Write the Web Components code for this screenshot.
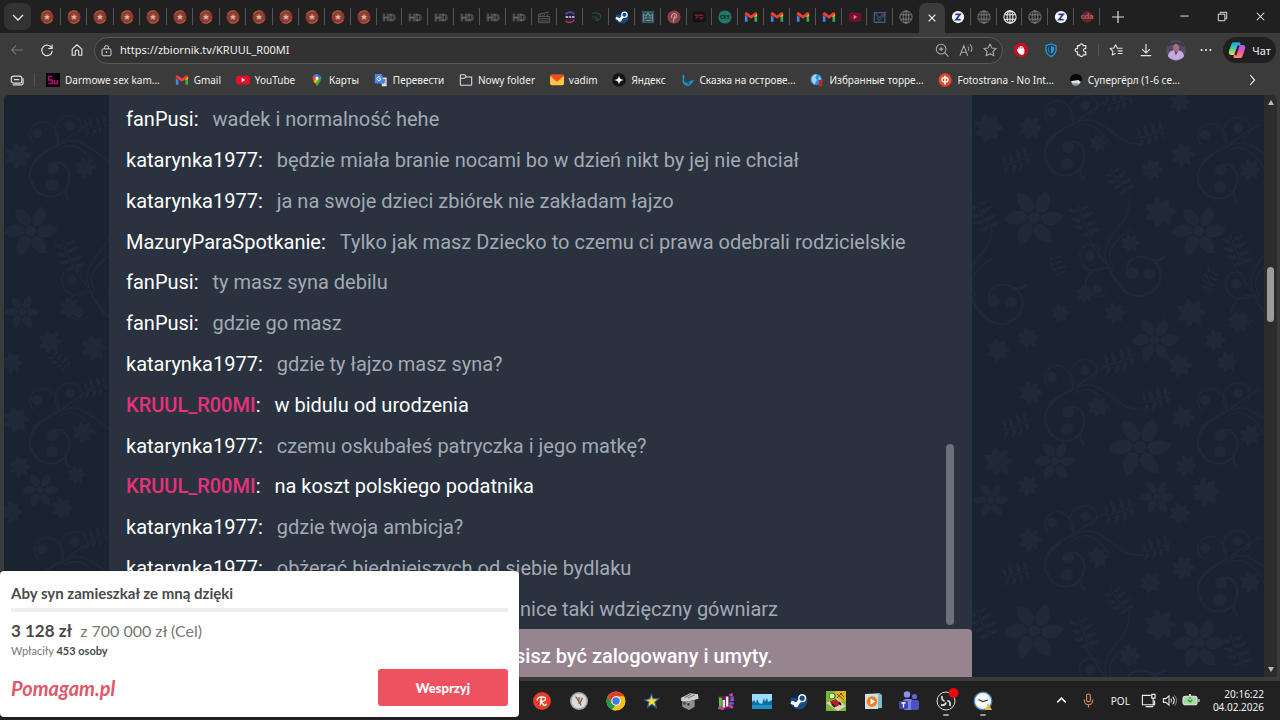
<!DOCTYPE html>
<html lang="pl">
<head>
<meta charset="utf-8">
<meta name="viewport" content="width=device-width, initial-scale=1">
<title>zbiornik.tv</title>
<style>
html,body{margin:0;height:100%;background:#3b3b3b;overflow:hidden}
body{font-family:"Noto Sans",sans-serif}
</style>
</head>
<body>
<desktop-screen></desktop-screen>
<script>
const ICONS = {
  down: `<path d="M3 6l5 5 5-5" stroke="#eee" stroke-width="1.300" fill="none"/>`,
  ball: `<circle cx="8" cy="8" r="7.500" fill="#8c3930"/><path d="M2 5a7 7 0 0 1 10-3M4 14a7 7 0 0 0 10-3" stroke="#a25d35" stroke-width="1.500" fill="none"/><circle cx="8" cy="8" r="4" fill="#a04842"/><path d="M8 4.800l1 2 2.300.2-1.700 1.500.6 2.300L8 9.600l-2.200 1.200.6-2.300L4.700 7 7 6.800z" fill="#d6b9ae"/>`,
  hd: `<text x="8" y="12" text-anchor="middle" font-family="Roboto,sans-serif" font-weight="700" font-size="11" fill="#222" stroke="#666" stroke-width=".8">HD</text>`,
  clap: `<path d="M1.500 7.500h13v7h-13zM1.500 5l12-2.500M1.500 5v2.500M3 7.500l2-3M7 7.500l2-3M11 7.500l2-3M2 10h12M2 12.500h12" stroke="#606060" fill="none"/>`,
  avd: `<circle cx="8" cy="8" r="6.500" fill="#281d38"/><path d="M3 5a6 6 0 0 1 10 0" stroke="#4a55a0" stroke-width="2" fill="none"/><path d="M3 12a6 6 0 0 0 10-1" stroke="#923d51" stroke-width="2" fill="none"/><path d="M3 8h3M7 8h2M10 8h3" stroke="#b9a6c6" stroke-width="2.500"/>`,
  dgreen: `<path d="M3 4c8-2 11 1 10 5-1 4-6 4-5 1M3 8c4-1 8 1 7 4" fill="none" stroke="#254a43" stroke-width="1.300"/>`,
  steam: `<circle cx="8" cy="8" r="7.500" fill="#164a80"/><path d="M1 5a7.500 7.500 0 0 1 14 0z" fill="#12233e"/><path d="M1 9l5 2 4-5" stroke="#f4f8fc" stroke-width="3" fill="none"/><circle cx="10.800" cy="5.500" r="3" fill="#164a80" stroke="#fff" stroke-width="1.400"/><circle cx="5.500" cy="11.500" r="2" fill="#fff"/>`,
  sketch: `<rect x="1" y="1" width="14" height="14" fill="#33545d"/><path d="M3 13V5l3 2 2-4 2 4 3-2v8M4 9h3M9 9h3M6 12h5" stroke="#789aa3" fill="none"/>`,
  pin: `<circle cx="8" cy="8" r="7.500" fill="#8d3f48"/><path d="M7 14l2-8M5.500 9C3.500 4 11 2.500 11 6.500c0 3-2.500 3.500-3.500 2" stroke="#c29ca1" stroke-width="1.300" fill="none"/>`,
  sport: `<rect x="1" y="2" width="14" height="12" fill="#170f10"/><path d="M3 6h4l-1 2-2 2M8 6h5M8 9h4l-2 2" stroke="#78282b" stroke-width="1.500" fill="none"/>`,
  olx: `<circle cx="8" cy="8" r="7.500" fill="#1f7b69"/><circle cx="5" cy="8" r="2" stroke="#122c29" stroke-width="1.300" fill="none"/><path d="M8 5v5M10 6l3 4M13 6l-3 4" stroke="#122c29" stroke-width="1.300"/>`,
  gmail: `<path d="M1 4.500V13.500h3V7z" fill="#4285f4"/><path d="M15 4.500V13.500h-3V7z" fill="#34a853"/><path d="M1 4v2.500l3 2.200V5z" fill="#c5221f"/><path d="M15 4v2.500l-3 2.200V5z" fill="#fbbc04"/><path d="M1 4.500C1 2.500 2.800 2 4 3L8 6.200l4-3.200C13.200 2 15 2.500 15 4.500L8 10z" fill="#ea4335"/>`,
  yt: `<rect x="0" y="3" width="16" height="10" rx="2.500" fill="#e60e2b"/><path d="M6.500 5.500v5l4-2.500z" fill="#fff"/>`,
  ytdim: `<rect x="1" y="3" width="14" height="10" rx="2.500" fill="#7d0c2b"/><path d="M6.500 5.500v5l4-2.500z" fill="#b68e99"/>`,
  mailchk: `<path d="M1.500 3h12v11h-12z" fill="none" stroke="#315f86" stroke-width="1.600"/><path d="M2 3l5 6 8-7" fill="none" stroke="#583f70" stroke-width="1.600"/><path d="M4 9l3 3 7-7" fill="none" stroke="#4a7892"/>`,
  globe: `<g fill="none" stroke="#858585"><circle cx="8" cy="8" r="7"/><ellipse cx="8" cy="8" rx="3.300" ry="7"/><path d="M2 5.500h12M2 10.500h12M8 1.500v13"/></g>`,
  globew: `<g fill="none" stroke="#ececec" stroke-width="1.200"><circle cx="8" cy="8" r="7"/><ellipse cx="8" cy="8" rx="3.300" ry="7"/><path d="M2 5.500h12M2 10.500h12M8 1.500v13"/></g>`,
  close: `<path d="M3.500 3.500l9 9M12.500 3.500l-9 9" stroke="#f2f2f2" stroke-width="1.500"/>`,
  z: `<circle cx="8" cy="8" r="7" fill="#f3f5ff"/><path d="M5 5h5.500L5.500 11H11" stroke="#27397c" stroke-width="1.800" fill="none"/>`,
  cda: `<circle cx="8" cy="8" r="6.500" fill="#672329"/><text x="8" y="10.500" text-anchor="middle" font-family="Roboto,sans-serif" font-size="9" font-weight="700" fill="#b25f66">cda</text>`,
  plus: `<path d="M8 2v12M2 8h12" stroke="#ddd" stroke-width="1.200"/>`,
  min: `<path d="M3.500 7.500h9" stroke="#eee"/>`,
  restore: `<path d="M3.500 5.500h7v7h-7zM5.500 5V3.500h7v7H11" stroke="#eee" fill="none" stroke-linejoin="round"/>`,
  x: `<path d="M4 4l8 8M12 4l-8 8" stroke="#eee" stroke-width="1.100"/>`,
  back: `<path d="M15 8H2M7 3L2 8l5 5" stroke="#777" fill="none" stroke-width="1.200"/>`,
  reload: `<path d="M13.500 6A6 6 0 1 0 14 9M13.800 2v4.300H9.500" stroke="#e6e6e6" fill="none" stroke-width="1.300"/>`,
  home: `<path d="M2.500 7L8 2l5.500 5v7H10v-4a2 2 0 0 0-4 0v4H2.500z" stroke="#e6e6e6" fill="none" stroke-width="1.300" stroke-linejoin="round"/>`,
  lock: `<rect x="2.500" y="6" width="11" height="8.500" rx="1.500" fill="none" stroke="#ddd" stroke-width="1.200"/><path d="M5.500 6V4.500a2.500 2.500 0 0 1 5 0V6" stroke="#ddd" stroke-width="1.200" fill="none"/><circle cx="8" cy="10" r="1" fill="#ddd"/>`,
  zoom: `<g stroke="#aaa" fill="none" stroke-width="1.200"><circle cx="7" cy="7" r="5.500"/><path d="M11 11L15.500 15.500M4.500 7h5M7 4.500v5"/></g>`,
  read: `<g stroke="#aaa" fill="none" stroke-width="1.200"><path d="M1 14.500L5.500 3 10 14.500M2.800 10.500h5.500M10 4q2 2 1 5M12.500 1.500q4 4 1 8.500"/></g>`,
  star: `<path d="M8 1l2.100 4.600 5 .6-3.700 3.400 1 5L8 12.200l-4.400 2.400 1-5L.9 6.200l5-.6z" fill="none" stroke="#aaa" stroke-width="1.200" stroke-linejoin="round"/>`,
  hand: `<path d="M4.700 0h6.600L16 4.700v6.600L11.300 16H4.700L0 11.300V4.700z" fill="#c70d21"/><path d="M5.500 8V5M7.200 7V3.500M9 7V3.500M10.600 8V5M5 7.500h6.200v3Q11 13 8.500 13 7 13 5 10L3.500 7.500" fill="#fff" stroke="#fff" stroke-width="1.300"/>`,
  shield: `<path d="M8 1l5.800 2v5Q13.500 12.500 8 15.500 2.500 12.500 2.200 8V3z" fill="#22394b" stroke="#239bd0" stroke-width="1.500"/><path d="M8 3.500l3.500 1.300V8q-.5 3-3.500 4.500z" fill="#239bd0"/><path d="M5 5v4l1.500 2" stroke="#239bd0" fill="none"/>`,
  puzzle: `<path d="M4 3h2.500a2 2 0 0 1 4 0H13.500V6.500a1.900 1.900 0 1 0 0 3.500v3.500h-3a2 2 0 0 1-4 0H4V10A1.900 1.900 0 1 1 4 6.500z" fill="none" stroke="#e6e6e6" stroke-width="1.300" stroke-linejoin="round"/>`,
  favs: `<path d="M11 6H9.500L7.500 2 5.600 5.800l-4.300.6 3.100 3-.7 4.300 3.800-2M10 6h5.500M10 9h5.500M10 12h5.500" fill="none" stroke="#e6e6e6" stroke-width="1.200" stroke-linejoin="round"/>`,
  dl: `<path d="M8 1v10M3.500 7L8 11.500 12.500 7M2 14.500h12" stroke="#e6e6e6" stroke-width="1.300" fill="none"/>`,
  avatar: `<circle cx="8" cy="8" r="8" fill="#574869"/><path d="M1.500 13Q2 8 8 8t6.500 5A8 8 0 0 1 1.500 13" fill="#c2aade"/><path d="M7 8l1 3 1.500-3" stroke="#533e60" fill="#eee"/><ellipse cx="8" cy="5.500" rx="2.500" ry="3.500" fill="#a96d75"/><path d="M5.500 4q2.500-4 5 0M1.500 4.500L5 2.500M11 2.500l3.500 2.500" stroke="#303b44" stroke-width="1.600" fill="none"/>`,
  dots: `<g fill="#eee"><circle cx="3" cy="8" r="1.200"/><circle cx="8" cy="8" r="1.200"/><circle cx="13" cy="8" r="1.200"/></g>`,
  copilot: `<defs><linearGradient id="a" x2="0" y2="1"><stop stop-color="#1d9bf0"/><stop offset=".5" stop-color="#3dd69a"/><stop offset="1" stop-color="#f6d93a"/></linearGradient><linearGradient id="b" x2="0" y2="1"><stop stop-color="#9f65f3"/><stop offset=".5" stop-color="#ef4eaf"/><stop offset="1" stop-color="#ff9158"/></linearGradient></defs><path d="M5 1h5q1.500 0 1 2L8.500 11q-.5 1.500-2 1.500H2.500Q0 12 1 8.500L3 3Q3.500 1 5 1z" fill="url(#a)"/><path d="M11 15H6q-1.500 0-1-2l2.500-8Q8 3.500 9.500 3.500h4Q16 4 15 7.500L13 13q-.5 2-2 2z" fill="url(#b)"/><path d="M9.500 4l-3 8.500" stroke="#202430" stroke-width="1.800"/>`,
  stack: `<rect x="1.500" y="3.500" width="12" height="8" rx="2.500" fill="none" stroke="#ddd" stroke-width="1.400"/><path d="M3 13.500h9.500a2.500 2.500 0 0 0 2.500-2.500V6M4.500 7.500h6" stroke="#ddd" stroke-width="1.300" fill="none"/>`,
  su: `<rect width="16" height="16" x="0" fill="#08030a"/><path d="M7 4H3v4h4v4H2.500M9.500 8v4H13V8" stroke="#ad0f6c" stroke-width="1.800" fill="none"/>`,
  maps: `<path d="M8 1a5 5 0 0 0-5 5l5-1z" fill="#4285f4"/><path d="M8 1a5 5 0 0 1 4.800 4L8 6z" fill="#1a73e8"/><path d="M3 5l3-3 2 4-3.500 4Q3 8 3 5" fill="#ea4335"/><path d="M5 10l7.500-6Q13.500 6 12 9l-4 6z" fill="#34a853"/><path d="M4 9l4-3 2 1-4 5z" fill="#fbbc04"/><circle cx="8" cy="5.800" r="1.800" fill="#fff"/>`,
  trans: `<path d="M8 5h6.500v10H9z" fill="#d8dce2"/><path d="M1 1h8l3 11H1z" fill="#4b84ed"/><path d="M7.500 5A2.300 2.300 0 1 0 7.500 8V6.500H5.500" stroke="#fff" fill="none"/><path d="M10 8h4M12 7v1q0 3-2 4M11 9l3 3" stroke="#5a6a80" stroke-width=".8" fill="none"/>`,
  folder: `<path d="M1.500 4V3q0-1 1-1h4l2 2.500h6v8.500q0 1-1 1h-11q-1 0-1-1zM1.500 6H6l2-1.500" fill="none" stroke="#ddd" stroke-width="1.200"/>`,
  mail: `<rect x="0" y="2" width="16" height="12" rx="2" fill="#ffc448"/><path d="M1 2h14l1 1-8 7-8-7z" fill="#f34b1c"/>`,
  yandex: `<circle cx="8" cy="8" r="7.800" fill="#121212"/><path d="M8 2.500q.5 5 5.500 5.500-5 .5-5.500 5.500-.5-5-5.500-5.500 5-.5 5.500-5.500" fill="#fff"/>`,
  tale: `<path d="M3 1l2 2v6l4 2 2-2 5-1-2 3-4 4-4-1-3-3z" fill="#1298e7"/><path d="M5 6v4l5 2M11 10l-2 4" stroke="#3b3b3b" fill="none"/>`,
  torr: `<circle cx="7" cy="7.500" r="6.500" fill="#2c93d7"/><path d="M2 5q3-5 6-3l-2 3 2 3-3 5-3-4M10 3l3 4-3 1" fill="#a6d0e5"/><path d="M10 8h4v7h-4z" fill="#b82c31"/>`,
  foto: `<circle cx="8" cy="8" r="7.600" fill="#ed4325"/><path d="M8 3v10" stroke="#fff" stroke-width="1.800"/><ellipse cx="8" cy="7.800" rx="3.600" ry="2.600" stroke="#fff" stroke-width="1.600" fill="none"/>`,
  girl: `<ellipse cx="8" cy="9" rx="5.500" ry="4.500" fill="#e9dfd9"/><path d="M1 9Q1 1 8 1t7 7l-2 2-2-2-8 1z" fill="#070707"/><path d="M3 13q5-3 9 0l-4 2z" fill="#7f9bb8"/>`,
  right: `<path d="M6 2.500L11 8l-5 5.500" stroke="#eee" stroke-width="1.300" fill="none"/>`,
  rr: `<circle cx="8" cy="8" r="8" fill="#e63b29"/><path d="M6.500 12l1-7M4 8Q3 4.500 8 4.500q4 0 3 2.200-.7 1.800-4 1.800L10 12q1.500 0 2-1.500" stroke="#fff" stroke-width="1.300" fill="none"/>`,
  wclock: `<circle cx="8" cy="8" r="8" fill="#a9a9a7"/><circle cx="8" cy="8" r="6.500" fill="#dedbd5"/><path d="M5 4l5 8M8 4.500v6M11 5l-2 5" stroke="#796656" stroke-width="1.200"/>`,
  chrome: `<circle cx="8" cy="8" r="8.500" fill="#fbc116"/><path d="M.64 3.750A8.500 8.500 0 0 1 15.360 3.750H8L4.320 10.100z" fill="#e33b2e"/><path d="M.64 3.750L4.320 10.120 8 12.250 8 16.500A8.500 8.500 0 0 1 .64 3.750" fill="#249a48"/><path d="M11.680 10.120L8 16.500Q6 16.500 4.500 15.500L8 11z" fill="#fbc116"/><circle cx="8" cy="8" r="4.200" fill="#fff"/><circle cx="8" cy="8" r="3.300" fill="#397de8"/>`,
  ystar: `<path d="M7.500 2l1.500 4 5 0-3.500 3 1.500 5-4-3-4 2.500 1.200-4.500-3.700-2L6 6z" fill="#f7dc2c" stroke="#2b5fae" stroke-width="1"/>`,
  tools: `<path d="M1 5l8-4 7 1 .5 4L9 8 1 8z" fill="#cfcfcf"/><path d="M2 8h7l4-1v6l-5 3-6-3z" fill="#93918b"/><path d="M3 9h2v2H3zM6.500 10h2v2h-2z" fill="#333"/><path d="M4 5l6-3M7 5.500l6-3" stroke="#7a7a7a"/>`,
  bars: `<path d="M1 3l10 1 4 10-9 2-4-3z" fill="#5c2050"/><path d="M3 5v8" stroke="#55c943" stroke-width="2.500"/><path d="M6 7v7" stroke="#f4d5dc" stroke-width="2.200"/><path d="M9 4v9" stroke="#eaeaef" stroke-width="2.200"/><path d="M11 3l3-1M12 7h3M11 12l3 2M1 14l5 1" stroke="#da3ab4" stroke-width="2.200"/><path d="M12 5h3M11 10h4" stroke="#4a72d9" stroke-width="2"/>`,
  monitor: `<rect x="-2" y="1" width="20" height="15" fill="#9bdcff"/><path d="M-2 13V9l2-2 2 3 1-4 2 4 3 1 2-6 1 4 2-4 1 4 4-2v6z" fill="#126ca4"/><path d="M-2 12h20v4H-2z" fill="#1d91c8"/>`,
  game: `<rect x="-2" y="-2" width="20" height="20" fill="#79b83e"/><path d="M7-2h11V8H9z" fill="#e5b321"/><path d="M9 1l7 6M12 0l4 4M8 6l6-6" stroke="#73560a"/><path d="M-2 10L9 5l9 8-8 5z" fill="#ddd4b3"/><path d="M2 8l6-2 5 5-5 3-5-3z" fill="#b52222"/><circle cx="4" cy="3" r="3" fill="#e9f69b" stroke="#348c21"/><path d="M4 11l3 3M11 9l2 3" stroke="#222" stroke-width="1.800"/>`,
  media: `<path d="M1 1l13-1 3 2v13L4 16z" fill="#85b9cb"/><rect x="0" y="1" width="13" height="15" fill="#cfe0e3"/><circle cx="7" cy="8.500" r="5.200" fill="#ef7d23"/><path d="M5.500 5.500v6l4.800-3z" fill="#fff"/>`,
  teams: `<circle cx="6" cy="1.500" r="3.200" fill="#8693f0"/><circle cx="13.500" cy="3.500" r="2.600" fill="#6168cf"/><rect x="2" y="6" width="10" height="11" rx="3" fill="#7b80ec"/><rect x="10" y="7" width="8" height="10" rx="2.500" fill="#524fc6"/><rect x="-2" y="8" width="9" height="8" rx="1.300" fill="#3b47ad"/><path d="M.5 10h4M2.500 10v4.500" stroke="#fff" stroke-width="1.300"/>`,
  obs: `<circle cx="8" cy="8" r="9" fill="#252525" stroke="#ddd"/><path d="M8 8Q3 8 4 3M8 8q5-1 4 5M8 8q0 5-5 4" stroke="#ddd" stroke-width="1.800" fill="none"/><circle cx="8" cy="8" r="1.500" fill="#222"/><circle cx="15.500" cy="0" r="5" fill="#e30b10"/>`,
  tclock: `<circle cx="8" cy="8" r="8.800" fill="#dcecf6" stroke="#4684aa" stroke-width="1.200"/><circle cx="8" cy="8" r="7" fill="#f9fcfd"/><path d="M3.500 6.500L8 8.500l5-1.500" stroke="#333" stroke-width="1.200" fill="none"/><path d="M13 10l4 7h-7z" fill="#e6bd50"/>`,
  up: `<path d="M3.500 10L8 5.500l4.500 4.500" stroke="#fff" stroke-width="1.600" fill="none"/>`,
  mic: `<g stroke="#d98b60" stroke-width="1.200" fill="none"><rect x="6" y="1" width="4" height="8.500" rx="2"/><path d="M3.500 7v1a4.500 4.500 0 0 0 9 0V7M8 12.500v3"/></g>`,
  net: `<path d="M10.500 2.500h-9v10h13V8M5 14.500h8M11.500 1.500h3.500v4h-3.500zM13 5.500v8" stroke="#eee" fill="none" stroke-width="1.200"/>`,
  vol: `<path d="M1.500 6H4l3.500-3v10L4 10H1.500zM9.500 6q1.500 2 0 4M11.500 4q3 4 0 8" stroke="#eee" fill="none" stroke-width="1.100"/><path d="M13.500 2.500q4 5.500 0 11" stroke="#888" fill="none"/>`,
  bat: `<rect x="0" y="3.500" width="15" height="9" rx="2.500" fill="#9be09b" stroke="#e2e9e2" stroke-width="1.200"/><path d="M17 6.500v3" stroke="#ddd" stroke-width="1.400"/><path d="M7.500 1v5M5 7l2.500 2.500L10 7" stroke="#4a6a4a" stroke-width="1.200" fill="none"/><path d="M7.500 1v3" stroke="#fff" stroke-width="1.600"/>`
};

function define(name, css, html, setup) {
  const t = document.createElement('template');
  t.innerHTML = `<style>*{box-sizing:border-box}button{font:inherit;color:inherit;border:0;background:none;padding:0;display:flex;align-items:center;justify-content:center}a{color:inherit;text-decoration:none}${css}</style>${html}`;
  customElements.define(name, class extends HTMLElement {
    constructor() {
      super();
      this.attachShadow({mode: 'open'}).append(t.content.cloneNode(true));
    }
    connectedCallback() { if (setup) setup(this, this.shadowRoot); }
  });
}

define('app-icon', `:host{display:block;flex:none;width:var(--size,16px);height:var(--size,16px)}svg{display:block;width:100%;height:100%;overflow:visible}`,
  `<svg viewBox="0 0 16 16" aria-hidden="true"></svg>`,
  (el, root) => { root.querySelector('svg').innerHTML = ICONS[el.getAttribute('name')] || ''; });

const tab = (n) => n === 'close'
  ? `<button class="tab active" aria-label="Zamknij kartę"><app-icon name="close"></app-icon></button>`
  : `<button class="tab" aria-label="Karta"><app-icon name="${n}"></app-icon></button>`;
const pinned = Array(10).fill('ball');
const open = ['ball','ball','ball','hd','hd','hd','hd','hd','hd','clap','avd','dgreen','steam','sketch','pin','sport','olx','gmail','gmail','gmail','gmail','ytdim','mailchk','globe','close','z','globe','globew','globe','z','cda'];

define('tab-strip', `
  :host{display:flex;height:33px;background:#202020;align-items:stretch;padding-right:1px}
  .menu{width:27px;height:27px;margin:3px 3px 3px 4px;border-radius:7px;background:#333}
  .tabs{flex:1;display:flex;min-width:0}
  .group{display:grid;grid-auto-flow:column;grid-auto-columns:1fr;min-width:0}
  .pinned{flex:265 1 0}.open{flex:801 1 0}
  .tab{position:relative;--size:14px;min-width:0}
  .tab::after{content:"";position:absolute;right:0;top:8px;height:17px;width:1px;background:#555}
  .active{background:#3b3b3b;margin-top:3px;border-radius:7px 7px 0 0;--size:12px}
  .active::after,.tab:has(+ .active)::after{display:none}
  .new{width:36px}
  .win{display:flex}.win button{width:38px;--size:15px}
  .gap{width:29px}
`, `
  <button class="menu" aria-label="Karty"><app-icon name="down"></app-icon></button>
  <div class="tabs"><div class="group pinned">${pinned.map(tab).join('')}</div><div class="group open">${open.map(tab).join('')}</div></div>
  <button class="new" aria-label="Nowa karta"><app-icon name="plus"></app-icon></button>
  <div class="gap"></div>
  <div class="win"><button aria-label="Minimalizuj"><app-icon name="min"></app-icon></button><button aria-label="Przywróć"><app-icon name="restore"></app-icon></button><button aria-label="Zamknij"><app-icon name="x"></app-icon></button></div>
`);

define('tool-bar', `
  :host{display:flex;height:34px;align-items:center;padding:0 4px 0 2px;background:#3b3b3b;color:#f2f2f2}
  button{width:30px;height:28px;--size:14px}
  .address{flex:1;display:flex;align-items:center;height:27px;margin:0 3px 0 2px;padding:0 0 0 5px;border:1px solid #5a5a5a;border-radius:14px;background:#323232;--size:13px}
  .address button{width:24px}
  input{flex:1;min-width:0;border:0;outline:0;padding:0 0 0 7px;background:none;color:#eee;font:11px/16px "Noto Sans",sans-serif}
  .sep{width:1px;height:12px;background:#555;margin:0 2px}
  .avatar{--size:20px}
  .chat{width:53px;height:26px;margin-left:2px;border-radius:13px;background:#202020;gap:6px;font-size:11px;--size:18px}
`, `
  <button aria-label="Wstecz"><app-icon name="back"></app-icon></button>
  <button aria-label="Odśwież"><app-icon name="reload"></app-icon></button>
  <button aria-label="Strona główna"><app-icon name="home"></app-icon></button>
  <div class="address"><app-icon name="lock"></app-icon><input aria-label="Adres" value="https://zbiornik.tv/KRUUL_R00MI">
    <button aria-label="Powiększenie"><app-icon name="zoom"></app-icon></button><button aria-label="Czytaj na głos"><app-icon name="read"></app-icon></button><button aria-label="Dodaj do ulubionych"><app-icon name="star"></app-icon></button></div>
  <button aria-label="Adblock"><app-icon name="hand"></app-icon></button>
  <button aria-label="Ochrona"><app-icon name="shield"></app-icon></button>
  <button aria-label="Rozszerzenia"><app-icon name="puzzle"></app-icon></button>
  <div class="sep"></div>
  <button aria-label="Ulubione"><app-icon name="favs"></app-icon></button>
  <button aria-label="Pobrane"><app-icon name="dl"></app-icon></button>
  <button class="avatar" aria-label="Profil"><app-icon name="avatar"></app-icon></button>
  <button aria-label="Więcej"><app-icon name="dots"></app-icon></button>
  <button class="chat"><app-icon name="copilot"></app-icon>Чат</button>
`);

const marks = [['su','Darmowe sex kam...'],['gmail','Gmail'],['yt','YouTube'],['maps','Карты'],['trans','Перевести'],['folder','Nowy folder'],['mail','vadim'],['yandex','Яндекс'],['tale','Сказка на острове...'],['torr','Избранные торре...'],['foto','Fotostrana - No Int...'],['girl','Супергёрл (1-6 се...']];
define('bookmarks-bar', `
  :host{display:flex;height:28px;align-items:center;padding-bottom:2px;background:#3b3b3b;color:#f0f0f0;font-size:10px;line-height:14px;--size:14px;box-sizing:border-box}
  .stack{width:34px}
  .sep{width:1px;height:14px;background:#555;margin-right:11px}
  nav{flex:1;min-width:0;display:flex;justify-content:space-between}
  a{display:flex;align-items:center;gap:5px;white-space:nowrap}
  .more{margin-left:44px;width:56px}
`, `
  <button class="stack" aria-label="Obszary robocze"><app-icon name="stack"></app-icon></button><div class="sep"></div>
  <nav>${marks.map(([i, t]) => `<a href="#"><app-icon name="${i}"></app-icon><span>${t}</span></a>`).join('')}</nav>
  <button class="more" aria-label="Więcej zakładek"><app-icon name="right"></app-icon></button>
`);

const put = (id, list) => list.map(([x, y, s = 1, r = 0]) => `<use href="#${id}" transform="translate(${x} ${y}) rotate(${r}) scale(${s})"/>`).join('');
const petal = (n, d) => Array.from({length: n}, (_, i) => `<path d="${d}" transform="rotate(${i * 360 / n})"/>`).join('');
define('floral-wallpaper', `
  :host{display:block;overflow:hidden;background:#1a2430}
  svg{display:block;width:100%;height:100%}
`, `
  <svg viewBox="4 95 1260 582" preserveAspectRatio="xMinYMin slice" aria-hidden="true">
    <defs>
      <g id="flower"><circle r="6"/>${petal(6, 'M7-2Q16-11 30-3 26 9 11 7L7 2zM13 0q5-4 10-2-3 5-10 2z')}</g>
      <g id="bloom">${petal(7, 'M0-3Q8-7 14 0 8 5 0 3z')}</g>
      <g id="fern"><path d="M-20 6Q0 4 20-8l1 1Q0 7-20 7z"/>
        <path d="M-14 4l-2-11q6 3 5 10zM-6 3l-3-14q7 4 7 12zM3 0L1-14q7 4 6 12zM11-4L10-16q6 4 5 10zM-12 8l-2 9q7-2 6-10zM-3 6l-1 10q7-3 6-11zM5 3l1 11q6-5 3-12zM12-1l4 9q4-6 0-11z"/></g>
      <g id="swirl"><circle cx="2" cy="7" r="6"/><circle cx="3" cy="-10" r="6"/><path d="M12-36Q-4-26-14-16-22-6-17 6L-20 6Q-24-8-15-20-4-30 12-36z"/>
        <g fill="none" stroke="#202937" stroke-width="2.500" stroke-linecap="round"><path d="M-18 4C-14 22 12 24 18 6 23-10 12-18 3-14M17 8q-4 8 2 14"/></g>
        <g fill="none" stroke="#202937" stroke-width="1.500"><path d="M5-30Q20-42 34-34 46-27 56-18 66-12 78-13M8-28Q22-38 34-26 42-20 46-10M7-33Q12-43 2-52-6-60-15-54-25-44-16-35M9-34Q0-52 12-60 25-66 31-56 34-46 25-42M12-36Q28-48 42-56"/></g><circle cx="-13" cy="-45" r="5"/><circle cx="20" cy="-52" r="5"/></g>
    </defs>
    <g fill="#202937">
      ${put('flower', [[1034,218],[1199,231,.9],[1155,340,.8],[1140,447,1.05],[1055,461,.7],[991,500,.6],[1157,497,.6],[1034,631],[1199,643,.9],[31,231,.9],[40,490,.6],[22,312,.6]])}
      ${put('bloom', [[1160,212,1.2],[1191,313,1.1],[1206,492,1.1],[1160,625,1.2],[1030,128,.9],[1098,143,.7],[1152,170,.8],[1183,155,.9],[1130,243,.7],[1115,313,.8],[1060,313,.7],[998,350,.9],[1028,338,.8],[1085,294,.7],[1030,393,.9],[1183,418,.9],[1186,466,.8],[998,462,1.1],[1028,486,.8],[1098,407,.8],[1180,513,.8],[1030,540,.9],[1183,568,.9],[1150,583,.8],[1130,656,.8],[1098,557,.8],[1215,340,.8],[1227,362,.8],[1238,322,.8],[988,128,1.1],[1180,102,.8],[1180,366,.9],[18,156,1],[85,168,.8],[16,420,1],[83,432,.8],[20,467,.8],[50,342,.9],[94,348,1],[12,363,.8],[70,308,.8],[76,475,.7],[12,512,.8],[62,508,.8],[1250,170,.8],[1250,435,.8],[1250,582,.8]])}
      ${put('fern', [[1150,133,.8],[1015,160,.8],[1120,180,.8,70],[1085,220,.9,85],[984,215,.9,80],[1238,250,.9,85],[1058,265,.6,90],[1118,360,.9],[1155,398,.8],[1015,425,.8],[1118,510,.9],[1155,547,.8],[1015,573,.8],[1120,600,.8,70],[1085,632,.9,85],[984,622,.9,80],[1238,650,.9,85],[1118,100,.8],[70,255,.9,85],[95,125,.7],[95,386,.7],[95,537,.7],[60,360,.6,60],[1210,280,.6,130]])}
      ${put('swirl', [[1065,157],[1218,180],[1065,422],[1218,445],[1065,568],[1218,593],[50,178],[50,445],[55,594],[1142,276,1,-90],[1004,304,1,-90],[1142,690,1,-90],[124,300,1,-90],[1288,304,1,-90]])}
    </g>
  </svg>
`);

define('chat-line', `
  :host{display:flex;align-items:center;gap:14px;white-space:nowrap;color:#a3a9b3;min-height:0}
  .name{color:#fff}
  b{font-weight:400}
  :host([host]){color:#fff}
  :host([host]) b{color:#e9307d;font-weight:500}
  :host([cut]) .name{display:none}
  :host([cut]){padding-left:394px}
`, `<span class="name"><b></b>:</span><span class="text"><slot></slot></span>`,
  (el, root) => { root.querySelector('b').textContent = el.getAttribute('from') || ''; });

const log = [
  ['fanPusi','wadek i normalność hehe'],['katarynka1977','będzie miała branie nocami bo w dzień nikt by jej nie chciał'],['katarynka1977','ja na swoje dzieci zbiórek nie zakładam łajzo'],['MazuryParaSpotkanie','Tylko jak masz Dziecko to czemu ci prawa odebrali rodzicielskie'],['fanPusi','ty masz syna debilu'],['fanPusi','gdzie go masz'],['katarynka1977','gdzie ty łajzo masz syna?'],['KRUUL_R00MI','w bidulu od urodzenia'],['katarynka1977','czemu oskubałeś patryczka i jego matkę?'],['KRUUL_R00MI','na koszt polskiego podatnika'],['katarynka1977','gdzie twoja ambicja?'],['katarynka1977','obżerać biedniejszych od siebie bydlaku'],['','nice taki wdzięczny gówniarz']
];
define('chat-panel', `
  :host{position:relative;display:flex;flex-direction:column;min-width:0;background:#29323e;font:20px/28px Roboto,sans-serif}
  .log{flex:1;min-height:0;display:grid;grid-auto-rows:1fr;padding:4px 0 0 17px}
  .thumb{position:absolute;right:18px;top:60%;height:31%;width:8px;border-radius:4px;background:#6a707a}
  .login{height:48px;padding:6px 0 0 406px;display:flex;align-items:center;background:#96848e;border-radius:4px 4px 0 0;color:#fff;font-weight:500;white-space:nowrap;box-sizing:border-box}
`, `
  <div class="log">${log.map(([f, t]) => `<chat-line ${f ? `from="${f}"` : 'cut'} ${f === 'KRUUL_R00MI' ? 'host' : ''}>${t}</chat-line>`).join('')}</div>
  <div class="thumb"></div>
  <div class="login">sisz być zalogowany i umyty.</div>
`);

define('page-view', `
  :host{display:flex;min-height:0;margin:0 3px 0 4px;border-radius:5px 5px 0 0;overflow:hidden}
  .page{position:relative;flex:1;min-width:0;display:grid;grid-template-columns:105px minmax(0,1fr) 292px}
  floral-wallpaper{position:absolute;inset:0}
  chat-panel{grid-column:2}
  .scroll{position:relative;flex:none;width:13px;background:#2c2c2c;display:flex;flex-direction:column;justify-content:space-between;align-items:center;padding:5px 0}
  .scroll i{border:3px solid transparent}
  .scroll .up{border-bottom:5px solid #bbb;border-top:0}
  .scroll .dn{border-top:5px solid #bbb;border-bottom:0}
  .thumb{position:absolute;left:3px;width:7px;top:29.5%;height:9.5%;border-radius:4px;background:#9c9c9c}
`, `
  <div class="page"><floral-wallpaper></floral-wallpaper><chat-panel></chat-panel></div>
  <div class="scroll"><i class="up"></i><div class="thumb"></div><i class="dn"></i></div>
`);

define('donation-card', `
  :host{display:flex;flex-direction:column;padding:12px 11px 11px;background:#fff;border-radius:4px;color:#4a4a4a;font-family:Lato,sans-serif;box-shadow:0 0 1px #000;box-sizing:border-box}
  h2{margin:0;font-size:15px;line-height:20px;font-weight:700}
  progress{appearance:none;display:block;width:100%;height:4px;margin:5px 0 9px;border:0;background:#eee}
  progress::-webkit-progress-bar{background:#eee}
  progress::-webkit-progress-value{background:#eee}
  p{margin:0;line-height:20px}
  .sum{font-size:16px;color:#777;display:flex;gap:8px;align-items:baseline}
  .sum b{font-size:17px;color:#4a4a4a}
  .who{font-size:11px;color:#777}.who b{color:#4a4a4a}
  footer{display:flex;justify-content:space-between;align-items:center;margin-top:auto}
  .logo{color:#e3566a;font:italic 700 20px/24px Lato,cursive}
  footer button{width:130px;height:37px;border-radius:3px;background:#ee5160;color:#fff;font-size:13px;font-weight:900}
`, `
  <h2 id="t">Aby syn zamieszkał ze mną dzięki</h2>
  <progress aria-labelledby="t" max="700000" value="3128"></progress>
  <p class="sum"><b>3 128 zł</b><span>z 700 000 zł (Cel)</span></p>
  <p class="who">Wpłaciły <b>453 osoby</b></p>
  <footer><a class="logo" href="#">Pomagam.pl</a><button>Wesprzyj</button></footer>
`);

const apps = ['rr','wclock','chrome','ystar','tools','bars','monitor','steam','game','media','teams','obs','tclock'];
const small = ['obs','tclock','game','monitor','teams','media'];
define('task-bar', `
  :host{display:flex;height:39px;background:#212121;color:#f0f0f0;font-size:10px;line-height:14px}
  .apps{margin-left:524px;flex:1;display:grid;grid-template-columns:repeat(13,1fr);max-width:477px}
  .apps button{--size:18px;position:relative}
  .apps .s{--size:16px}
  .run::after{content:"";position:absolute;bottom:4px;width:6px;height:2px;border-radius:1px;background:#999}
  .tray{margin-left:auto;display:flex;align-items:center;padding-right:16px}
  .tray button{width:27px;height:30px;--size:15px}
  .tray .lang{width:37px}
  .tray .sys{width:62px;gap:6px;margin-right:12px}
  time{text-align:right;line-height:13px}
`, `
  <div class="apps">${apps.map((a) => `<button aria-label="Aplikacja" class="${small.includes(a) ? 's' : ''} ${a === 'obs' || a === 'tclock' ? 'run' : ''}"><app-icon name="${a}"></app-icon></button>`).join('')}</div>
  <div class="tray"><button aria-label="Ukryte ikony"><app-icon name="up"></app-icon></button><button aria-label="Mikrofon"><app-icon name="mic"></app-icon></button><button class="lang">POL</button>
  <button class="sys" aria-label="Sieć, głośność, bateria"><app-icon name="net"></app-icon><app-icon name="vol"></app-icon><app-icon name="bat"></app-icon></button>
  <time datetime="2026-02-04T20:16:22">20:16:22<br>04.02.2026</time></div>
`);

define('desktop-screen', `
  :host{display:flex;flex-direction:column;height:100vh;position:relative;background:#3b3b3b}
  page-view{flex:1}
  .edge{height:4px}
  donation-card{position:absolute;left:0;bottom:3px;width:519px;height:146px}
`, `<tab-strip></tab-strip><tool-bar></tool-bar><bookmarks-bar></bookmarks-bar><page-view></page-view><div class="edge"></div><task-bar></task-bar><donation-card></donation-card>`);
</script>
</body>
</html>
